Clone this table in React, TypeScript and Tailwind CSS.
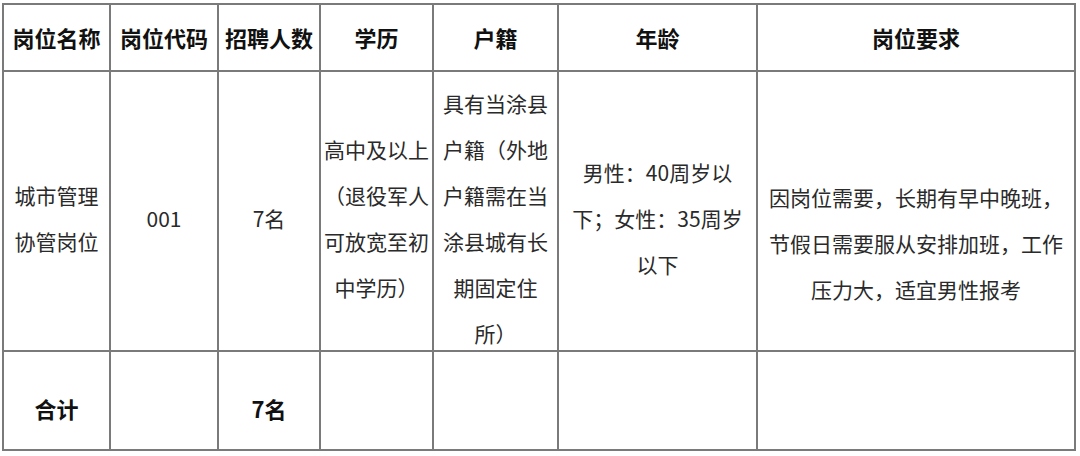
const cell =
  "flex justify-center border-r-2 border-b-2 border-[#7a7a7a] text-center";

const body = `${cell} items-center text-[21px] leading-[46px] text-[#2a2a2a]`;
const bold = `${cell} items-center text-[22px] font-bold text-[#111]`;

const headers = ["岗位名称", "岗位代码", "招聘人数", "学历", "户籍", "年龄", "岗位要求"];

const Lines = ({ lines }: { lines: string[] }) => (
  <div className="whitespace-nowrap">
    {lines.map((line, i) => (
      <div key={i}>{line}</div>
    ))}
  </div>
);

export default function App() {
  return (
    <div className="w-[1080px] h-[456px] bg-white pt-[3px] pl-[2px] font-['Noto_Sans_CJK_SC','Noto_Sans',sans-serif]">
      <div className="grid w-fit grid-cols-[107px_108px_102px_113px_125px_199px_318px] grid-rows-[67px_280px_99px] border-l-2 border-t-2 border-[#7a7a7a]">
        {headers.map((h) => (
          <div key={h} className={bold}>
            {h}
          </div>
        ))}

        <div className={`${body} pt-[14px]`}>
          <Lines lines={["城市管理", "协管岗位"]} />
        </div>
        <div className={`${body} pt-[14px]`}>001</div>
        <div className={`${body} pt-[14px]`}>7名</div>
        <div className={`${body} pt-[14px]`}>
          <Lines lines={["高中及以上", "（退役军人", "可放宽至初", "中学历）"]} />
        </div>
        <div className={`${body} pt-[14px]`}>
          <Lines
            lines={["具有当涂县", "户籍（外地", "户籍需在当", "涂县城有长", "期固定住", "所）"]}
          />
        </div>
        <div className={`${body} pt-[14px]`}>
          <Lines lines={["男性：40周岁以", "下；女性：35周岁", "以下"]} />
        </div>
        <div className={`${body} pt-[64px]`}>
          <Lines
            lines={[
              "因岗位需要，长期有早中晚班，",
              "节假日需要服从安排加班，工作",
              "压力大，适宜男性报考",
            ]}
          />
        </div>

        <div className={`${bold} pt-[16px]`}>合计</div>
        <div className={cell} />
        <div className={`${bold} pt-[16px]`}>7名</div>
        <div className={cell} />
        <div className={cell} />
        <div className={cell} />
        <div className={cell} />
      </div>
    </div>
  );
}
